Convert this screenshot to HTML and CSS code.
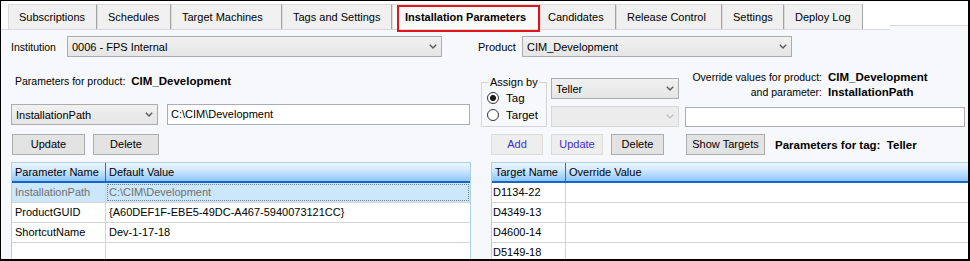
FILE: index.html
```html
<!DOCTYPE html>
<html>
<head>
<meta charset="utf-8">
<title>Installation Parameters</title>
<link rel="stylesheet" href="styles.css">
</head>
<body>
<div class="window">
  <div class="tabstrip">
    <div class="tabrow">
      <div class="tab w-sub">Subscriptions</div>
      <div class="tab w-sch">Schedules</div>
      <div class="tab w-tm">Target Machines</div>
      <div class="tab w-tags">Tags and Settings</div>
      <div class="tab tab-active w-inst">Installation Parameters</div>
      <div class="tab w-cand">Candidates</div>
      <div class="tab w-rel">Release Control</div>
      <div class="tab w-set">Settings</div>
      <div class="tab w-log">Deploy Log</div>
    </div>
    <div class="strip-end"></div>
  </div>

  <div class="panel">
    <div class="row-top">
      <span class="lbl lbl-inst">Institution</span>
      <div class="combo combo-inst"><span>0006 - FPS Internal</span><svg class="chev" viewBox="0 0 8 5" width="8" height="5"><polyline points="0.8,0.8 4,4 7.2,0.8" fill="none" stroke="#5a5a5a" stroke-width="1.4"/></svg></div>
      <span class="lbl lbl-prod">Product</span>
      <div class="combo combo-prod"><span>CIM_Development</span><svg class="chev" viewBox="0 0 8 5" width="8" height="5"><polyline points="0.8,0.8 4,4 7.2,0.8" fill="none" stroke="#5a5a5a" stroke-width="1.4"/></svg></div>
    </div>

    <div class="main">
      <div class="col-left">
        <div class="prod-line"><span class="lbl">Parameters for product:</span><span class="val">CIM_Development</span></div>
        <div class="path-row">
          <div class="combo combo-path"><span>InstallationPath</span><svg class="chev" viewBox="0 0 8 5" width="8" height="5"><polyline points="0.8,0.8 4,4 7.2,0.8" fill="none" stroke="#5a5a5a" stroke-width="1.4"/></svg></div>
          <div class="textbox tb-path">C:\CIM\Development</div>
        </div>
        <div class="btn-row">
          <div class="btn btn-upd-l">Update</div>
          <div class="btn btn-del-l">Delete</div>
        </div>
        <div class="grid grid-left">
          <div class="ghead">
            <div class="hcell c1">Parameter Name</div>
            <div class="hcell">Default Value</div>
          </div>
          <div class="grow grow-sel">
            <div class="cell c1">InstallationPath</div>
            <div class="cell cfill cell-focus">C:\CIM\Development</div>
          </div>
          <div class="grow">
            <div class="cell c1">ProductGUID</div>
            <div class="cell cfill">{A60DEF1F-EBE5-49DC-A467-5940073121CC}</div>
          </div>
          <div class="grow">
            <div class="cell c1">ShortcutName</div>
            <div class="cell cfill">Dev-1-17-18</div>
          </div>
          <div class="grow">
            <div class="cell c1"></div>
            <div class="cell cfill"></div>
          </div>
        </div>
      </div>

      <div class="col-right">
        <div class="top-right">
          <fieldset class="groupbox">
            <legend>Assign by</legend>
            <div class="radio"><span class="dot dot-on"></span><span>Tag</span></div>
            <div class="radio"><span class="dot"></span><span>Target</span></div>
          </fieldset>
          <div class="combo-col">
            <div class="combo combo-tag"><span>Teller</span><svg class="chev" viewBox="0 0 8 5" width="8" height="5"><polyline points="0.8,0.8 4,4 7.2,0.8" fill="none" stroke="#5a5a5a" stroke-width="1.4"/></svg></div>
            <div class="combo combo-tag combo-dis"><span></span><svg class="chev" viewBox="0 0 8 5" width="8" height="5"><polyline points="0.8,0.8 4,4 7.2,0.8" fill="none" stroke="#c2c2c2" stroke-width="1.4"/></svg></div>
          </div>
          <div class="override">
            <div class="ov-grid">
              <span class="lbl ov-lbl">Override values for product:</span><span class="val">CIM_Development</span>
              <span class="lbl ov-lbl">and parameter:</span><span class="val">InstallationPath</span>
            </div>
            <div class="textbox tb-ov"></div>
          </div>
        </div>
        <div class="btn-row">
          <div class="btn btn-flat btn-add">Add</div>
          <div class="btn btn-flat btn-upd-r">Update</div>
          <div class="btn btn-del-r">Delete</div>
          <div class="btn btn-show">Show Targets</div>
          <span class="val tag-lbl">Parameters for tag:&nbsp; Teller</span>
        </div>
        <div class="grid grid-right">
          <div class="ghead">
            <div class="hcell c1">Target Name</div>
            <div class="hcell">Override Value</div>
          </div>
          <div class="grow">
            <div class="cell c1">D1134-22</div>
            <div class="cell cfill"></div>
          </div>
          <div class="grow">
            <div class="cell c1">D4349-13</div>
            <div class="cell cfill"></div>
          </div>
          <div class="grow">
            <div class="cell c1">D4600-14</div>
            <div class="cell cfill"></div>
          </div>
          <div class="grow">
            <div class="cell c1">D5149-18</div>
            <div class="cell cfill"></div>
          </div>
        </div>
      </div>
    </div>
  </div>
</div>
</body>
</html>
```

FILE: styles.css
```css
* { box-sizing: border-box; }
html, body { margin: 0; padding: 0; background: #fff; }
body {
  font-family: "Liberation Sans", Arial, sans-serif;
  font-size: 11px;
  color: #000;
}

.window {
  width: 970px;
  height: 261px;
  border: 1px solid #000;
  border-right-width: 2px;
  border-bottom-width: 2px;
  background: #fff;
  overflow: hidden;
  display: flex;
  flex-direction: column;
}

/* ---------- tabs ---------- */
.tabstrip { display: flex; height: 29px; flex: none; }
.tabrow {
  width: 889px;
  height: 29px;
  padding: 3px 0 0 7px;
  border-bottom: 1px solid #d9d9d9;
  display: flex;
  align-items: flex-end;
}
.strip-end {
  flex: 1;
  margin-top: 24px;
  border-top: 1px solid #d9d9d9;
  background: #f7f8fb;
}
.tab {
  position: relative;
  height: 25px;
  line-height: 25px;
  padding-left: 10px;
  background: #f0f0f0;
  border: 1px solid #dcdcdc;
  border-bottom: none;
  border-right-color: #a3a3a3;
  white-space: nowrap;
  flex: none;
}
.w-sub { width: 89px; }
.w-sch { width: 74px; }
.w-tm { width: 111px; }
.w-tags { width: 110px; }
.w-inst { width: 148px; }
.w-cand { width: 76px; padding-left: 7px; }
.w-rel { width: 106px; }
.w-set { width: 62px; }
.w-log { width: 79px; }
.tab-active {
  background: #fafafa;
  font-weight: bold;
  padding-left: 12px;
  z-index: 2;
}
.tab-active::after {
  content: "";
  position: absolute;
  left: 4px;
  right: -1px;
  top: 0;
  bottom: -3px;
  border: 2px solid #e3141c;
}

/* ---------- panel ---------- */
.panel {
  flex: 1;
  background: #f7f8fb;
  padding: 6px 0 0 10px;
  min-height: 0;
}
.lbl { font-size: 10.5px; white-space: nowrap; }
.val { font-weight: bold; font-size: 11.5px; white-space: nowrap; }

.row-top { display: flex; align-items: center; height: 21px; }
.lbl-inst { width: 56px; }
.lbl-prod { margin-left: 36px; width: 44px; font-size: 11px; }

.combo {
  display: flex;
  align-items: center;
  justify-content: space-between;
  height: 21px;
  border: 1px solid #acacac;
  background: linear-gradient(#f1f1f1, #e5e5e5);
  padding: 0 4px 0 4px;
  white-space: nowrap;
  flex: none;
}
.chev { flex: none; display: block; }
.combo-inst { width: 375px; }
.combo-prod { width: 270px; }
.combo-path { width: 147px; }
.combo-tag { width: 128px; }
.combo-dis { background: #ececec; border-color: #d6d6d6; }

.textbox {
  height: 21px;
  line-height: 19px;
  border: 1px solid #abadb3;
  background: #fff;
  padding-left: 3px;
  white-space: nowrap;
  flex: none;
}

.main { display: flex; margin-top: 13px; height: 200px; }
.col-left { width: 460px; flex: none; display: flex; flex-direction: column; }
.col-right { flex: 1; margin-left: 10px; display: flex; flex-direction: column; min-width: 0; }

.prod-line { margin-top: 4px; height: 14px; line-height: 14px; padding-left: 4px; display: flex; align-items: baseline; }
.prod-line .val { margin-left: 6px; }

.path-row { margin-top: 16px; display: flex; height: 21px; }
.tb-path { margin-left: 9px; width: 303px; }

.btn-row { margin-top: 9px; display: flex; align-items: center; height: 21px; }
.col-right .btn-row { margin-top: 7px; }
.btn {
  height: 21px;
  line-height: 19px;
  text-align: center;
  border: 1px solid #adadad;
  background: #e3e3e3;
  flex: none;
  white-space: nowrap;
}
.btn-flat { background: #eeeeee; border-color: #dcdcdc; color: #3a30c8; }
.btn-upd-l { margin-left: 1px; width: 73px; }
.btn-del-l { margin-left: 8px; width: 66px; }
.btn-add { margin-left: 10px; width: 52px; }
.btn-upd-r { margin-left: 8px; width: 52px; }
.btn-del-r { margin-left: 8px; width: 53px; }
.btn-show { margin-left: 22px; width: 79px; }
.tag-lbl { margin-left: 10px; }

/* ---------- right top ---------- */
.top-right { display: flex; align-items: flex-start; height: 57px; }
.groupbox {
  margin: 6px 0 0 0;
  padding: 0 0 0 5px;
  width: 66px;
  height: 51px;
  min-width: 0;
  border: 1px solid #d5d5d5;
  flex: none;
}
.groupbox legend {
  padding: 0 1px;
  margin-left: 2px;
  line-height: 12px;
  font-size: 11px;
}
.radio { display: flex; align-items: center; height: 17px; white-space: nowrap; font-size: 11.5px; }
.radio:first-of-type { margin-top: 1px; }
.dot {
  width: 12px;
  height: 12px;
  border-radius: 50%;
  border: 1px solid #333;
  background: #fff;
  margin-right: 7px;
  flex: none;
}
.dot-on { background: radial-gradient(circle, #1a1a1a 0, #1a1a1a 2.6px, #fff 3.4px); }

.combo-col { margin: 8px 0 0 4px; display: flex; flex-direction: column; gap: 7px; flex: none; }

.override { margin-left: 6px; width: 280px; flex: none; display: flex; flex-direction: column; }
.ov-grid {
  display: grid;
  grid-template-columns: 137px auto;
  column-gap: 6px;
  line-height: 15px;
  align-items: baseline;
}
.ov-lbl { text-align: right; }
.tb-ov { margin-top: 7px; height: 20px; width: 280px; }

/* ---------- grids ---------- */
.grid {
  margin-top: 7px;
  border: 1px solid #aad3e6;
  border-bottom: none;
  background: #fff;
  flex: 1;
  overflow: hidden;
}
.grid-right { margin-left: 10px; border-right: none; }
.ghead {
  display: flex;
  height: 20px;
  background: linear-gradient(#eaf5ff 0%, #d6ebfe 35%, #a9d4fc 75%, #8fc5f8 100%);
  border-bottom: 2px solid #1466c6;
}
.hcell { line-height: 18px; padding-left: 3px; white-space: nowrap; }
.ghead .c1 { border-right: 1px solid #2f6cbd; }
.grid-left .c1 { width: 94px; flex: none; }
.grid-right .c1 { width: 74px; flex: none; }
.grow { display: flex; height: 20px; border-bottom: 1px solid #d4d4d4; }
.cell { line-height: 19px; padding-left: 3px; white-space: nowrap; overflow: hidden; }
.grow .c1 { border-right: 1px solid #d4d4d4; }
.grid-right .grow .c1 { padding-left: 1px; }
.cfill { flex: 1; }
.grow-sel { background: #cce6fa; color: #707070; }
.cell-focus { outline: 1px dotted #6a7f92; outline-offset: -2px; }
```
